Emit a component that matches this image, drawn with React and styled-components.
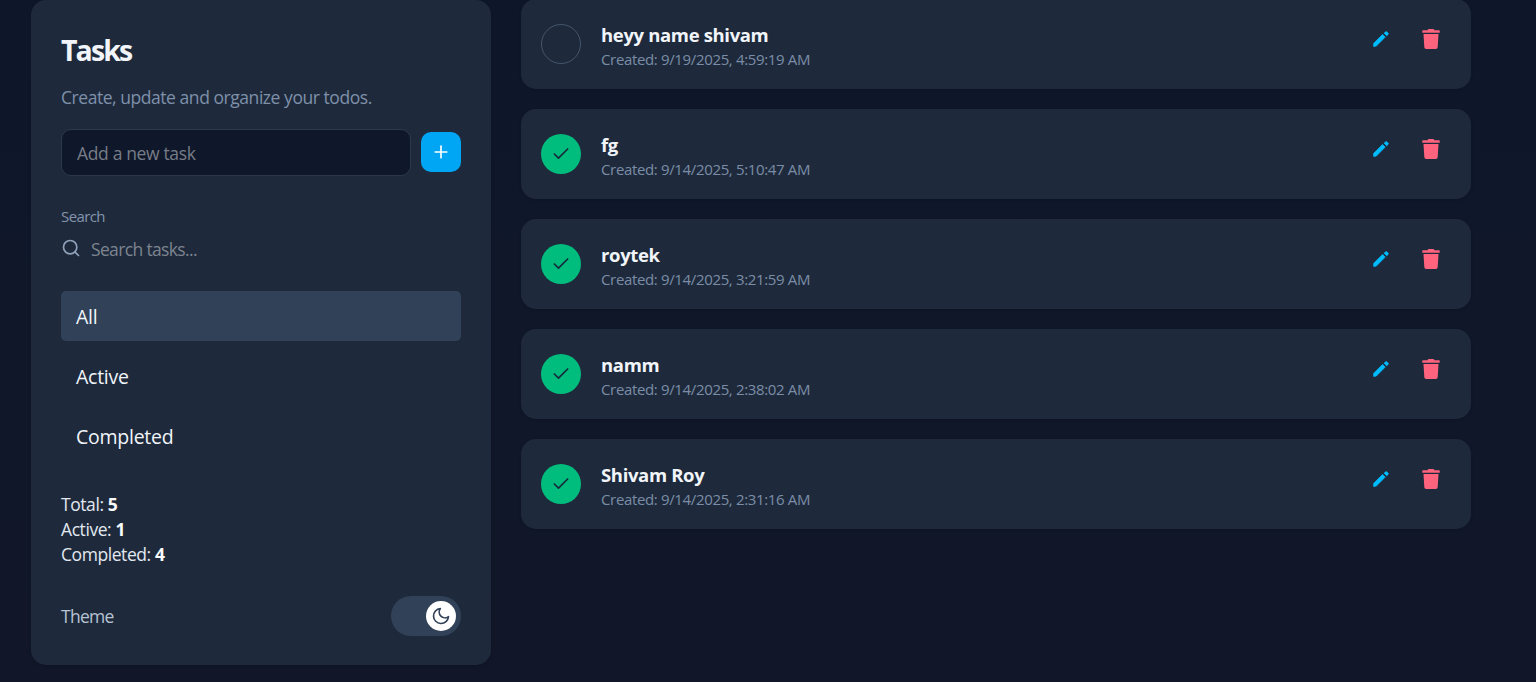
import React, { useState } from "react";
import styled, { createGlobalStyle, css } from "styled-components";
import { FiCheck, FiMoon, FiPlus, FiSearch } from "react-icons/fi";
import { FaTrash } from "react-icons/fa";

const GlobalStyle = createGlobalStyle`
  * { box-sizing: border-box; }
  body {
    margin: 0;
    overflow: hidden;
    color: #f1f5f9;
    background: #0f172a;
    font-family: "Segoe UI", "Open Sans", "Noto Sans", sans-serif;
  }
  button, input { font: inherit; color: inherit; letter-spacing: inherit; }
  button { border: 0; padding: 0; background: none; cursor: pointer; }
`;

const Page = styled.main`
  display: flex;
  align-items: flex-start;
  gap: 30px;
  height: 682px;
  padding: 0 65px 0 31px;
  background: linear-gradient(180deg, #0e172a 0%, #111728 100%);
`;

const Sidebar = styled.aside`
  display: flex;
  flex-direction: column;
  width: 460px;
  height: 665px;
  padding: 30px 30px 29px;
  flex: none;
  background: #1e2a3c;
  border-radius: 15px;
  box-shadow: 0 1px 3px rgba(0, 0, 0, 0.15);
`;

const Title = styled.h1`
  margin: 0;
  font-size: 28.5px;
  font-weight: 700;
  line-height: 40px;
  letter-spacing: -1.9px;
`;

const Subtitle = styled.p`
  margin: 15px 0 0;
  font-size: 17.5px;
  line-height: 25px;
  letter-spacing: -0.45px;
  color: #7f90a9;
`;

const AddRow = styled.form`
  display: flex;
  align-items: center;
  gap: 10px;
  margin-top: 19px;
`;

const TaskInput = styled.input`
  width: 350px;
  height: 47px;
  padding: 0 15px;
  font-size: 17.5px;
  letter-spacing: -0.35px;
  background: #0f172a;
  border: 1px solid #2c394d;
  border-radius: 10px;
  outline: none;
  &::placeholder { color: #777d87; opacity: 1; }
`;

const AddButton = styled.button`
  display: grid;
  place-items: center;
  width: 40px;
  height: 40px;
  margin-bottom: 2px;
  color: #fff;
  background: #00a6f4;
  border-radius: 10px;
`;

const SearchLabel = styled.label`
  margin-top: 30px;
  font-size: 15px;
  line-height: 20px;
  letter-spacing: -0.6px;
  color: #8494ac;
`;

const SearchRow = styled.div`
  display: flex;
  align-items: center;
  gap: 10px;
  height: 30px;
  margin-top: 9px;
  color: #90a1b9;
  svg { margin-bottom: 2px; }
`;

const SearchInput = styled.input`
  flex: 1;
  padding: 0;
  font-size: 17.5px;
  letter-spacing: -0.65px;
  background: transparent;
  border: 0;
  outline: none;
  &::placeholder { color: #7d848f; opacity: 1; }
`;

const Filters = styled.nav`
  display: flex;
  flex-direction: column;
  gap: 10px;
  margin-top: 28px;
`;

const FilterButton = styled.button`
  height: 50px;
  padding: 1px 15px 0;
  text-align: left;
  font-size: 19.5px;
  letter-spacing: -0.25px;
  border-radius: 5px;
  ${({ $selected }) => $selected && css`background: #314158;`}
`;

const Stats = styled.div`
  margin-top: 31px;
  font-size: 17.5px;
  line-height: 25px;
  letter-spacing: -0.43px;
  color: #e2e8f0;
  strong { font-weight: 700; color: #f8fafc; }
`;

const ThemeRow = styled.div`
  display: flex;
  align-items: center;
  justify-content: space-between;
  margin-top: 29px;
  font-size: 17.5px;
  letter-spacing: -0.7px;
  color: #b8c3d2;
`;

const Toggle = styled.button`
  display: flex;
  align-items: center;
  justify-content: flex-end;
  width: 70px;
  height: 40px;
  padding: 5px;
  background: #314158;
  border-radius: 20px;
`;

const Knob = styled.span`
  display: grid;
  place-items: center;
  width: 30px;
  height: 30px;
  color: #314158;
  background: #fff;
  border-radius: 50%;
`;

const TaskList = styled.section`
  display: flex;
  flex: 1;
  flex-direction: column;
  gap: 20px;
  margin-top: -1px;
`;

const TaskCard = styled.article`
  display: flex;
  align-items: flex-start;
  gap: 20px;
  height: 90px;
  padding: 25px 20px 0;
  background: #1e2a3c;
  border-radius: 15px;
  box-shadow: 0 1px 3px rgba(0, 0, 0, 0.15);
`;

const StatusButton = styled.button`
  display: grid;
  place-items: center;
  width: 40px;
  height: 40px;
  color: #162b3b;
  border-radius: 50%;
  ${({ $done }) => $done ? css`background: #00bc7d;` : css`border: 1px solid #45556c;`}
`;

const TaskBody = styled.div`
  flex: 1;
  margin-top: -2px;
`;

const TaskName = styled.h2`
  margin: 0;
  font-size: 18.5px;
  font-weight: 700;
  line-height: 25px;
  letter-spacing: -0.35px;
`;

const Created = styled.p`
  margin: 0;
  font-size: 15px;
  line-height: 24px;
  letter-spacing: -0.35px;
  color: #7b8da6;
`;

const Actions = styled.div`
  display: flex;
  gap: 10px;
  margin-top: -5px;
`;

const IconButton = styled.button`
  display: grid;
  place-items: center;
  width: 40px;
  height: 40px;
  color: ${({ $color }) => $color};
`;

function PencilIcon() {
  return (
    <svg width="20" height="20" viewBox="0 0 20 20" fill="currentColor" stroke="currentColor" strokeWidth="0.8" strokeLinejoin="round">
      <path d="M2.7 14.4 11.6 5.5 14.2 8.1 5.3 17 2.7 17.4Z" />
      <path d="M13.2 4.2 14.7 2.7Q15.2 2.3 15.7 2.8L17.2 4.3Q17.6 4.8 17.2 5.3L15.7 6.7Z" />
    </svg>
  );
}

const tasks = [
  { name: "heyy name shivam", created: "9/19/2025, 4:59:19 AM", done: false },
  { name: "fg", created: "9/14/2025, 5:10:47 AM", done: true },
  { name: "roytek", created: "9/14/2025, 3:21:59 AM", done: true },
  { name: "namm", created: "9/14/2025, 2:38:02 AM", done: true },
  { name: "Shivam Roy", created: "9/14/2025, 2:31:16 AM", done: true },
];

export default function App() {
  const [filter, setFilter] = useState("All");
  const done = tasks.filter((t) => t.done).length;
  const visible = tasks.filter(
    (t) => filter === "All" || (filter === "Completed") === t.done
  );

  return (
    <>
      <GlobalStyle />
      <Page>
        <Sidebar>
          <Title>Tasks</Title>
          <Subtitle>Create, update and organize your todos.</Subtitle>
          <AddRow onSubmit={(e) => e.preventDefault()}>
            <TaskInput placeholder="Add a new task" />
            <AddButton aria-label="Add"><FiPlus size={20} /></AddButton>
          </AddRow>
          <SearchLabel htmlFor="search">Search</SearchLabel>
          <SearchRow>
            <FiSearch size={20} />
            <SearchInput id="search" placeholder="Search tasks..." />
          </SearchRow>
          <Filters>
            {["All", "Active", "Completed"].map((f) => (
              <FilterButton key={f} $selected={f === filter} onClick={() => setFilter(f)}>
                {f}
              </FilterButton>
            ))}
          </Filters>
          <Stats>
            <div>Total: <strong>{tasks.length}</strong></div>
            <div>Active: <strong>{tasks.length - done}</strong></div>
            <div>Completed: <strong>{done}</strong></div>
          </Stats>
          <ThemeRow>
            <span>Theme</span>
            <Toggle aria-label="Dark theme"><Knob><FiMoon size={20} /></Knob></Toggle>
          </ThemeRow>
        </Sidebar>
        <TaskList>
          {visible.map((t) => (
            <TaskCard key={t.name}>
              <StatusButton $done={t.done} aria-label="Toggle">
                {t.done && <FiCheck size={20} />}
              </StatusButton>
              <TaskBody>
                <TaskName>{t.name}</TaskName>
                <Created>Created: {t.created}</Created>
              </TaskBody>
              <Actions>
                <IconButton $color="#00bcff" aria-label="Edit"><PencilIcon /></IconButton>
                <IconButton $color="#ff637e" aria-label="Delete"><FaTrash size={20} /></IconButton>
              </Actions>
            </TaskCard>
          ))}
        </TaskList>
      </Page>
    </>
  );
}
